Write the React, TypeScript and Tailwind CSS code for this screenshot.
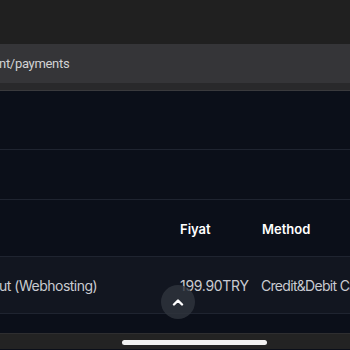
import React from "react";

export default function App() {
  return (
    <div className="relative w-[350px] h-[350px] overflow-hidden bg-[#0b0f19]" style={{ fontFamily: "Inter, 'Noto Sans', sans-serif" }}>
      <div className="h-[44px] bg-[#202020]" />
      <div className="h-[39px] bg-[#353538] flex items-center overflow-hidden whitespace-nowrap">
        <span className="text-[13px] text-[#d2d2d4] -ml-[1px] tracking-[-0.3px] mt-[1px]" style={{ fontFamily: "Roboto, sans-serif" }}>nt/payments</span>
      </div>
      <div className="h-[7px] bg-[#29292b]" />
      <div className="h-[1px] bg-[#3a3a3d]" />
      <div className="h-[59px] border-b border-[#1f2430]" />
      <div className="h-[50px] border-b border-[#1f2430]" />
      <div className="h-[57px] border-b border-[#1f2430] grid grid-cols-[180px_82px_1fr] items-center whitespace-nowrap pt-[3px]">
        <div />
        <div className="text-[13px] font-semibold text-white">Fiyat</div>
        <div className="text-[13px] font-semibold text-white">Method</div>
      </div>
      <div className="h-[57px] bg-[#121620] border-b border-[#1f2430] grid grid-cols-[180px_81px_1fr] items-center whitespace-nowrap overflow-hidden text-[14px] text-[#c9cbd1] pt-[1px]">
        <div className="-ml-[1px] tracking-[-0.5px]">ut (Webhosting)</div>
        <div className="tracking-[-0.3px]">199.90TRY</div>
        <div className="overflow-hidden tracking-[-0.7px]">Credit&amp;Debit Card</div>
      </div>
      <div className="h-[19px]" />
      <div className="h-[16px] bg-[#232323] border-t border-[#2e2e30] flex pt-[6px] pl-[122px]">
        <div className="w-[145px] h-[5px] rounded-full bg-[#f2f2f2]" />
      </div>
      <div className="absolute left-[161px] top-[285px] w-[34px] h-[34px] rounded-full bg-[#30343d]/80 flex items-center justify-center">
        <svg width="12" height="8" viewBox="0 0 12 8" fill="none">
          <path d="M2 6.5 L6 2.5 L10 6.5" stroke="#ffffff" strokeWidth="2.4" strokeLinecap="round" strokeLinejoin="round" />
        </svg>
      </div>
    </div>
  );
}
